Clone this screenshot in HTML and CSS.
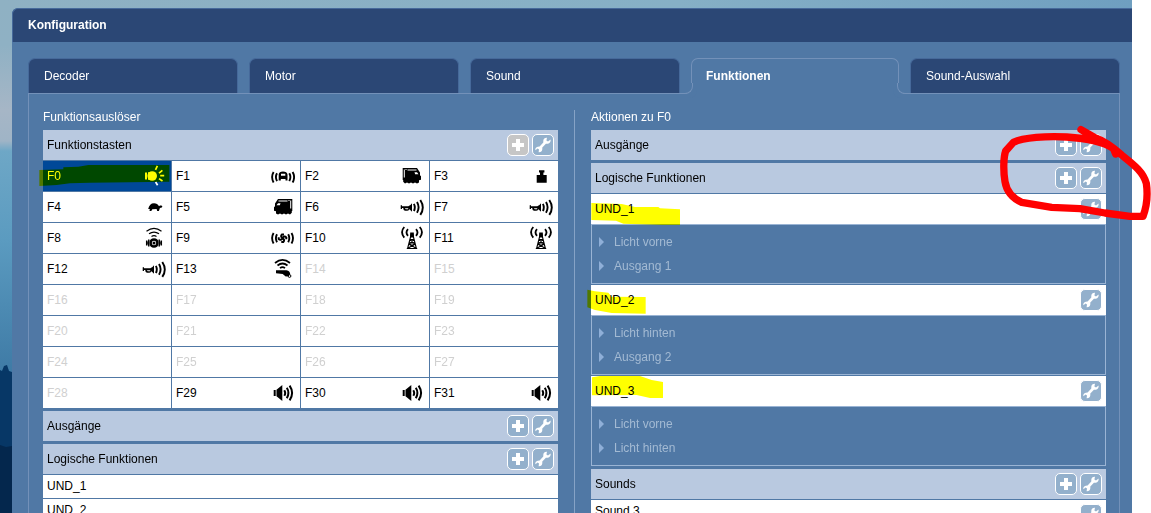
FILE: index.html
```html
<!DOCTYPE html>
<html lang="de">
<head>
<meta charset="utf-8">
<title>Konfiguration</title>
<link rel="stylesheet" href="styles.css">
</head>
<body>
<svg class="defs" aria-hidden="true">
  <symbol id="plus" viewBox="0 0 20 20"><path fill="#fff" d="M8 4h4v4h4v4h-4v4H8v-4H4V8h4z"/></symbol>
  <symbol id="wrench" viewBox="0 0 20 20"><path fill="#fff" d="M17.600 4.500 15 6.400 13.400 5.400 14 2.800C12 2.600 10.400 3.800 10.300 5.800L10.300 7.600 6.600 11.600 4.800 11.700C3 12 2 13.600 2.400 15.200L4.600 13.600 6 14.600 5.600 17.200C7.600 17.400 9.200 16.300 9.300 14.300L9.300 12.600 12.900 8.800 14.800 8.700C16.800 8.500 18 6.600 17.600 4.500Z"/></symbol>
  <symbol id="light" viewBox="0 0 24 24"><path fill="currentColor" d="M3 8.500h2v7H3zM6 8.200h4v7.600H6z"/><circle cx="10.200" cy="12" r="4.800" fill="currentColor"/><path stroke="currentColor" stroke-width="1.700" d="M15.400 1.800l-1.900 4M20.400 6.400l-3.400 2.800M18.200 11.600h4M17 14.600l3.500 2.400M13.600 18l2 3.200"/></symbol>
  <symbol id="cabin" viewBox="0 0 24 24"><g fill="none" stroke="currentColor" stroke-width="1.900"><path d="M2.600 8q-3 5 0 10.500M6 9.300q-2.200 3.700 0 7.800M18.300 9.300q2.200 3.700 0 7.800M21.600 8q3 5 0 10.500"/></g><path fill="currentColor" fill-rule="evenodd" d="M7.700 16.500V10.500Q8 7.600 12 7.600T16.500 10.500V16.500h-2v-1.500h-4.700V16.500zM10 9.800v2h4.300v-2z"/></symbol>
  <symbol id="loco" viewBox="0 0 24 24"><path fill="currentColor" fill-rule="evenodd" d="M2.700 4H17l3 4.600v2.600l1 1v3.500l-2 .6v2.300l-2 .8-2-1-2 1-2-1-2 1-2-1-2 1-1.800-1.600V16H2.700zM3.800 5.600v8h1v-8zM7.500 5.500v.9h9v-.9zM14.500 8.200l.6 2H18.500l-1.500-2zM5.500 5v1h1V5z"/></symbol>
  <symbol id="weight" viewBox="0 0 24 24"><path fill="currentColor" d="M10 6.300h5.400v2.200h-1v2.400h3.300v7.900H7.700v-7.900h3.300V8.500H10z"/></symbol>
  <symbol id="turtle" viewBox="0 0 24 24"><path fill="currentColor" d="M6.200 14Q7.500 8.300 12 8.300q3.500 0 5 3l1-.8h1.500l.9.900-.6 1-1.900.600-1 3h-1.700l-.6-2-4.300.2-1 1.800H7.500l.3-2z"/></symbol>
  <symbol id="horn" viewBox="0 0 24 24"><path fill="currentColor" fill-rule="evenodd" d="M.7 10.300h1.300v1h6.300Q10.300 10.800 12 8.300v8.400L9.500 14.200Q8.500 15.800 7 15.800H5Q3.300 15.500 3.200 13H2v1H.7zM5 13.200q.2 1 1 1h2.200v-1z"/><path fill="none" stroke="currentColor" stroke-width="1.900" d="M13.900 8.800q1.800 3.600 0 7.200M17 6.900q3.200 5.400 0 10.800M20.300 4.900q5 7.600 0 15"/></symbol>
  <symbol id="bell" viewBox="0 0 24 24"><g fill="none" stroke="currentColor"><path stroke-width="1.200" d="M4.500 5.200Q12 -.4 19.500 5.200M7 7.800q5-3.500 10 0M9.500 10.400q2.500-1.700 5 0"/><circle cx="12" cy="17" r="3.500" stroke-width="2.600"/><path stroke-width="1.500" d="M7 13.500q-1.500 3.500 0 7M17 13.500q1.500 3.500 0 7M4.700 14.500v5M19.300 14.500v5"/></g><circle cx="12" cy="17" r="1.500" fill="currentColor"/></symbol>
  <symbol id="fan" viewBox="0 0 24 24"><g fill="none" stroke="currentColor" stroke-width="1.900"><path d="M2.600 7q-3 5 0 10.500M6 8.200q-2.200 4 0 8M17.200 8.200q2.200 4 0 8M20.500 7q3 5 0 10.500"/><path stroke-width="2" d="M11.500 12.200Q9 10.500 11 8.500h2M11.500 12.200q1.700-2.800 3.800-.8v1.800M11.500 12.200q2.800 1.800.8 3.700h-2M11.500 12.200q-1.700 2.800-3.800.8v-1.800"/></g></symbol>
  <symbol id="tower" viewBox="0 0 24 24"><g fill="none" stroke="currentColor" stroke-width="1.800"><path d="M4.300 1Q-.2 6 4.300 11.600M8 3.200q-3 3.200 0 6.600M16 3.200q3 3.200 0 6.600M19.700 1q4.500 5 0 10.600"/><path stroke-width="1.100" d="M11.300 8 7.600 22.500M12.700 8l3.700 14.500M10 13.500h4M9 18h6M6.800 22.500h10.400M10 13.700l5 4.200M14 13.700l-5 4.200M9 18.200l7.200 4M15 18.200l-7.200 4"/></g><path fill="currentColor" d="M10.200 6.500h3.600l.2 5h-4z"/></symbol>
  <symbol id="whistle" viewBox="0 0 24 24"><path fill="none" stroke="currentColor" stroke-width="1.700" d="M4 6Q11.500 -.2 19 6M6.500 8.500q5-4 10 0M9 11.200q2.500-2 5 0"/><path fill="currentColor" d="M5 13.200h10.500q3.500.8 3.700 3.800l-1.500 2.300-3 .2-3-2.500-6.700-.8z"/><circle cx="18.500" cy="19" r="1.400" fill="none" stroke="currentColor"/></symbol>
  <symbol id="speaker" viewBox="0 0 24 24"><path fill="currentColor" d="M2.700 9h2v6h-2zM5.500 8.700 11.300 4v16l-5.800-4.700z"/><path fill="none" stroke="currentColor" stroke-width="2" d="M13.300 9.200q1.800 2.800 0 5.600M15.800 6.800q3.200 5 0 10.400M18.600 4.600q5 7.400 0 14.800"/></symbol>
</svg>

<div class="desktop">
  <svg class="trees" viewBox="0 0 12 148" aria-hidden="true"><path d="M0 5l2 1 2-5 3-1 2 6 3 1v141H0z" fill="#073766"/><path d="M0 80l6 2 6-1v67H0z" fill="#04274d"/></svg>
  <main class="window">
    <h1 class="window-title">Konfiguration</h1>
    <div class="window-body">
      <div class="tabs" role="tablist">
        <button class="tab" role="tab">Decoder</button>
        <button class="tab" role="tab">Motor</button>
        <button class="tab" role="tab">Sound</button>
        <button class="tab tab-active" role="tab" aria-selected="true">Funktionen</button>
        <button class="tab" role="tab">Sound-Auswahl</button>
      </div>
      <div class="tab-panel" role="tabpanel">
        <section class="column">
          <h2 class="column-title">Funktionsauslöser</h2>
          <div class="group">
            <header class="bar"><h3 class="bar-title">Funktionstasten</h3>
              <button class="tool" aria-label="Hinzufügen" disabled><svg><use href="#plus"/></svg></button>
              <button class="tool" aria-label="Bearbeiten"><svg><use href="#wrench"/></svg></button></header>
            <div class="keys">
              <button class="key key-selected">F0<svg class="glyph"><use href="#light"/></svg><svg class="marker marker-key" viewBox="117 483 393 93" aria-hidden="true"><path d="M118 510L190 508V502L235 500L265 495H508V545L270 548L210 550L170 555L118 558Z"/></svg></button>
              <button class="key">F1<svg class="glyph"><use href="#cabin"/></svg></button>
              <button class="key">F2<svg class="glyph"><use href="#loco"/></svg></button>
              <button class="key">F3<svg class="glyph"><use href="#weight"/></svg></button>
              <button class="key">F4<svg class="glyph"><use href="#turtle"/></svg></button>
              <button class="key">F5<svg class="glyph mirrored"><use href="#loco"/></svg></button>
              <button class="key">F6<svg class="glyph"><use href="#horn"/></svg></button>
              <button class="key">F7<svg class="glyph"><use href="#horn"/></svg></button>
              <button class="key">F8<svg class="glyph"><use href="#bell"/></svg></button>
              <button class="key">F9<svg class="glyph"><use href="#fan"/></svg></button>
              <button class="key">F10<svg class="glyph"><use href="#tower"/></svg></button>
              <button class="key">F11<svg class="glyph"><use href="#tower"/></svg></button>
              <button class="key">F12<svg class="glyph"><use href="#horn"/></svg></button>
              <button class="key">F13<svg class="glyph"><use href="#whistle"/></svg></button>
              <button class="key key-empty">F14</button>
              <button class="key key-empty">F15</button>
              <button class="key key-empty">F16</button>
              <button class="key key-empty">F17</button>
              <button class="key key-empty">F18</button>
              <button class="key key-empty">F19</button>
              <button class="key key-empty">F20</button>
              <button class="key key-empty">F21</button>
              <button class="key key-empty">F22</button>
              <button class="key key-empty">F23</button>
              <button class="key key-empty">F24</button>
              <button class="key key-empty">F25</button>
              <button class="key key-empty">F26</button>
              <button class="key key-empty">F27</button>
              <button class="key key-empty">F28</button>
              <button class="key">F29<svg class="glyph"><use href="#speaker"/></svg></button>
              <button class="key">F30<svg class="glyph"><use href="#speaker"/></svg></button>
              <button class="key">F31<svg class="glyph"><use href="#speaker"/></svg></button>
            </div>
          </div>
          <div class="group">
            <header class="bar"><h3 class="bar-title">Ausgänge</h3>
              <button class="tool" aria-label="Hinzufügen"><svg><use href="#plus"/></svg></button>
              <button class="tool" aria-label="Bearbeiten"><svg><use href="#wrench"/></svg></button></header>
          </div>
          <div class="group">
            <header class="bar"><h3 class="bar-title">Logische Funktionen</h3>
              <button class="tool" aria-label="Hinzufügen"><svg><use href="#plus"/></svg></button>
              <button class="tool" aria-label="Bearbeiten"><svg><use href="#wrench"/></svg></button></header>
            <div class="row row-small">UND_1</div>
            <div class="row row-small">UND_2</div>
          </div>
        </section>
        <div class="divider"></div>
        <section class="column">
          <h2 class="column-title">Aktionen zu F0</h2>
          <div class="group">
            <header class="bar"><h3 class="bar-title">Ausgänge</h3>
              <button class="tool" aria-label="Hinzufügen"><svg><use href="#plus"/></svg></button>
              <button class="tool" aria-label="Bearbeiten"><svg><use href="#wrench"/></svg></button></header>
          </div>
          <div class="group">
            <header class="bar"><h3 class="bar-title">Logische Funktionen</h3>
              <button class="tool" aria-label="Hinzufügen"><svg><use href="#plus"/></svg></button>
              <button class="tool" aria-label="Bearbeiten"><svg><use href="#wrench"/></svg></button></header>
            <div class="row"><span class="row-name">UND_1</span>
              <button class="tool" aria-label="Bearbeiten"><svg><use href="#wrench"/></svg></button>
              <svg class="marker" viewBox="21 282 294 93" aria-hidden="true"><path d="M34 309L125 312L165 321H235L240 325L300 328V375H246L130 371L108 362L34 360Z"/></svg></div>
            <ul class="inputs"><li>Licht vorne</li><li>Ausgang 1</li></ul>
            <div class="row"><span class="row-name">UND_2</span>
              <button class="tool" aria-label="Bearbeiten"><svg><use href="#wrench"/></svg></button>
              <svg class="marker" viewBox="21 15 294 93" aria-hidden="true"><path d="M22 29L45 34L85 38L95 50L197 51V101L95 99L45 90L22 82Z"/></svg></div>
            <ul class="inputs"><li>Licht hinten</li><li>Ausgang 2</li></ul>
            <div class="row"><span class="row-name">UND_3</span>
              <button class="tool" aria-label="Bearbeiten"><svg><use href="#wrench"/></svg></button>
              <svg class="marker" viewBox="21 288 294 93" aria-hidden="true"><path d="M36 292L60 288H180L215 300L249 306V354H210L170 345L36 346Z"/></svg></div>
            <ul class="inputs"><li>Licht vorne</li><li>Licht hinten</li></ul>
          </div>
          <div class="group">
            <header class="bar"><h3 class="bar-title">Sounds</h3>
              <button class="tool" aria-label="Hinzufügen"><svg><use href="#plus"/></svg></button>
              <button class="tool" aria-label="Bearbeiten"><svg><use href="#wrench"/></svg></button></header>
            <div class="row row-top"><span class="row-name">Sound 3</span>
              <button class="tool" aria-label="Bearbeiten"><svg><use href="#wrench"/></svg></button></div>
          </div>
        </section>
      </div>
    </div>
  </main>
</div>
<svg class="scribble" viewBox="0 0 513 390" aria-hidden="true"><path d="M303 59L345 83C368 91 390 103 425 135C460 163 490 185 499 220C504 255 500 290 489 319H450L375 309L300 296L215 292L125 277C98 265 80 245 75 215C69 180 71 140 77 123L100 97C130 83 200 77 260 81C320 85 370 95 400 115L407 132"/></svg>
</body>
</html>
```

FILE: styles.css
```css
* { box-sizing: border-box; }

body {
  margin: 0;
  height: 100vh;
  overflow: hidden;
  position: relative;
  background: #fff;
  font: 12px/15px "Liberation Sans", Arial, sans-serif;
  color: #000;
}

h1, h2, h3, ul { margin: 0; padding: 0; font-size: inherit; font-weight: normal; }
button { margin: 0; border: 0; font: inherit; color: inherit; text-align: left; }
.defs { display: none; }

.desktop {
  position: relative;
  height: 100%;
  margin-right: 19px;
  padding: 8px 0 0 12px;
  background:
    linear-gradient(90deg, #8fb1c3, #86b0c6 60%, #6f9fc0) top / 100% 8px no-repeat,
    linear-gradient(#8fb1c3 0, #8fb1c4 45px, #a6b6c6 110px, #9fb4c6 141px, #6ea7c6 151px, #5b9bc0 240px, #3f7ba6 370px);
}
.trees { position: absolute; left: 0; bottom: 0; width: 12px; height: 148px; }

.window {
  position: relative;
  background: #5078a5;
  border-top-left-radius: 6px;
}
.window-title {
  padding: 9px 15px;
  background: #2b4775;
  border: 1px solid #46699a;
  border-width: 1px 0 0 1px;
  border-top-left-radius: 6px;
  font-weight: bold;
  color: #fff;
}
.window-body { padding: 16px 12px 0 16px; }

.tabs { display: flex; gap: 11px; }
.tab {
  flex: 1;
  height: 35px;
  padding: 0 15px;
  background: #2b4775;
  border: 1px solid #46699a;
  border-bottom: 0;
  border-radius: 7px 7px 0 0;
  color: #fff;
}
.tab-active {
  position: relative;
  height: 36px;
  margin-bottom: -1px;
  padding: 0 14px;
  background: #5078a5;
  border-color: #7391b9;
  font-weight: bold;
}
.tab-active::before,
.tab-active::after {
  content: "";
  position: absolute;
  bottom: 0;
  width: 9px;
  height: 10px;
  background: #5078a5;
  border-bottom: 1px solid #7391b9;
}
.tab-active::before {
  left: -9px;
  border-right: 1px solid #7391b9;
  border-bottom-right-radius: 8px;
  box-shadow: 4px 4px 0 #5078a5;
}
.tab-active::after {
  right: -9px;
  border-left: 1px solid #7391b9;
  border-bottom-left-radius: 8px;
  box-shadow: -4px 4px 0 #5078a5;
}

.tab-panel {
  display: grid;
  grid-template-columns: 1fr 1px 1fr;
  gap: 16px;
  padding: 16px 13px 0 14px;
  border: 1px solid #7391b9;
  border-bottom: 0;
}
.divider { background: #86a3c6; }
.column-title { padding-bottom: 5px; color: #fff; }

.group { display: flex; flex-direction: column; gap: 1px; margin-bottom: 3px; }
.bar, .row {
  display: flex;
  align-items: center;
  gap: 3px;
  min-height: 30px;
  padding: 0 4px;
}
.bar { background: #b9c9e0; }
.bar-title, .row-name { flex: 1; }
.row { position: relative; background: #fff; }
.row-small { min-height: 23px; }

.tool {
  width: 22px;
  height: 22px;
  padding: 0;
  background: #93b0cc;
  border: 1px solid #fff;
  border-radius: 5px;
}
.tool:disabled { background: #c6c6c6; }
.tool svg { display: block; width: 20px; height: 20px; }

.row-top { align-items: flex-start; padding-top: 4px; }

.keys { display: grid; grid-template-columns: repeat(4, 1fr); gap: 1px; }
.key {
  position: relative;
  display: flex;
  align-items: center;
  justify-content: space-between;
  height: 30px;
  padding: 0 5px 0 4px;
  background: #fff;
}
.key-selected { background: #004898; color: #fff; }
.key-empty { color: #d0d0d0; }
.glyph { width: 24px; height: 24px; }
.mirrored { transform: scaleX(-1); }

.inputs {
  margin-top: -1px;
  padding: 5px 7px;
  border: 1px solid #9ab4d4;
  list-style: none;
  line-height: 24px;
  color: #a3bad3;
}
.inputs li { display: flex; align-items: center; gap: 10px; }
.inputs li::before {
  content: "";
  border: 5px solid transparent;
  border-left: 5px solid #8fafd8;
  border-right: 0;
}

.marker {
  position: absolute;
  left: -4px;
  top: 0;
  width: 98px;
  height: 31px;
  fill: #ff0;
  mix-blend-mode: multiply;
  pointer-events: none;
}
.marker-key { width: 131px; }

.scribble {
  position: absolute;
  right: 0;
  top: 110px;
  width: 171px;
  height: 130px;
  fill: none;
  stroke: #f00;
  stroke-width: 22;
  stroke-linecap: round;
  stroke-linejoin: round;
  pointer-events: none;
}
```
